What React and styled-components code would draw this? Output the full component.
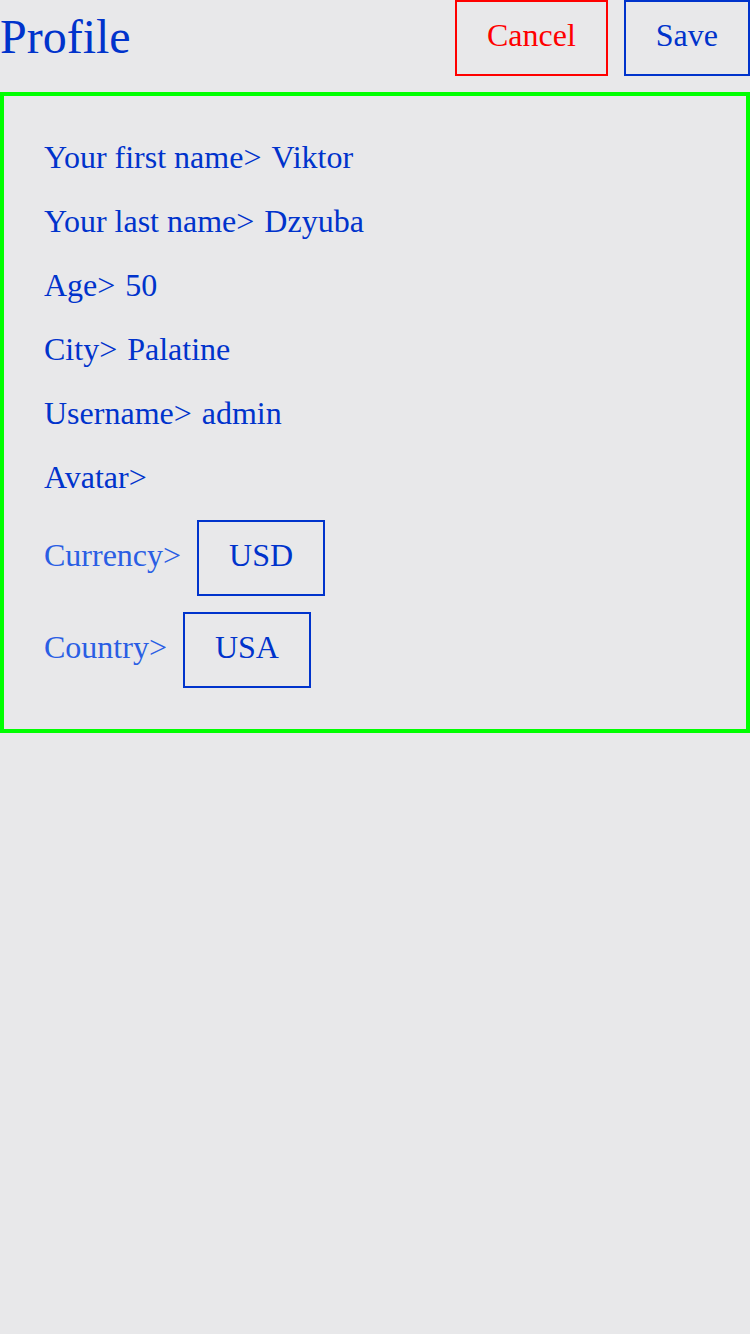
import React from 'react';
import styled, { createGlobalStyle } from 'styled-components';

const GlobalStyle = createGlobalStyle`
    html, body {
        margin: 0;
        padding: 0;
        background: #e8e8ea;
    }
    body {
        min-height: 1334px;
        font-family: "Liberation Serif", "Times New Roman", serif;
    }
`;

const Header = styled.header`
    display: flex;
    align-items: flex-start;
    justify-content: space-between;
    height: 76px;
`;

const Title = styled.h1`
    margin: 0;
    padding-top: 9px;
    font-size: 48px;
    font-weight: normal;
    color: #0033cc;
`;

const Actions = styled.div`
    display: flex;
    gap: 16px;
`;

const Button = styled.button`
    box-sizing: border-box;
    height: 76px;
    padding: 0 30px 6px;
    background: transparent;
    border: 2px solid ${p => p.danger ? '#ff0000' : '#0033cc'};
    color: ${p => p.danger ? '#ff0000' : '#0033cc'};
    font-family: inherit;
    font-size: 32px;
    line-height: 40px;
    cursor: pointer;
`;

const Form = styled.section`
    margin-top: 16px;
    border: 4px solid #00ff00;
    padding: 37px 40px 41px;
`;

const Row = styled.p`
    margin: 0 0 16px;
    font-size: 32px;
    line-height: 48px;
    color: #0033cc;
`;

const Value = styled.span`
    margin-left: 10px;
`;

const SelectRow = styled.div`
    display: flex;
    align-items: baseline;
    margin-top: ${p => p.first ? '19px' : '16px'};
`;

const SelectLabel = styled.span`
    margin-right: 16px;
    font-size: 32px;
    color: #2a5ee4;
`;

const SelectBox = styled.div`
    box-sizing: border-box;
    height: 76px;
    padding: 13px 30px 19px;
    border: 2px solid #0033cc;
    font-size: 32px;
    line-height: 40px;
    color: #0033cc;
`;

const fields = [
    ['Your first name', 'Viktor'],
    ['Your last name', 'Dzyuba'],
    ['Age', '50'],
    ['City', 'Palatine'],
    ['Username', 'admin'],
    ['Avatar', ''],
];

const selects = [
    ['Currency', 'USD'],
    ['Country', 'USA'],
];

const App = () => (
    <>
        <GlobalStyle/>
        <Header>
            <Title>Profile</Title>
            <Actions>
                <Button danger>Cancel</Button>
                <Button>Save</Button>
            </Actions>
        </Header>
        <Form>
            {fields.map(([label, value]) =>
                <Row key={label}>
                    {label}&gt;
                    {value && <Value>{value}</Value>}
                </Row>
            )}
            {selects.map(([label, value], i) =>
                <SelectRow key={label} first={i === 0}>
                    <SelectLabel>{label}&gt;</SelectLabel>
                    <SelectBox>{value}</SelectBox>
                </SelectRow>
            )}
        </Form>
    </>
);

export default App;
